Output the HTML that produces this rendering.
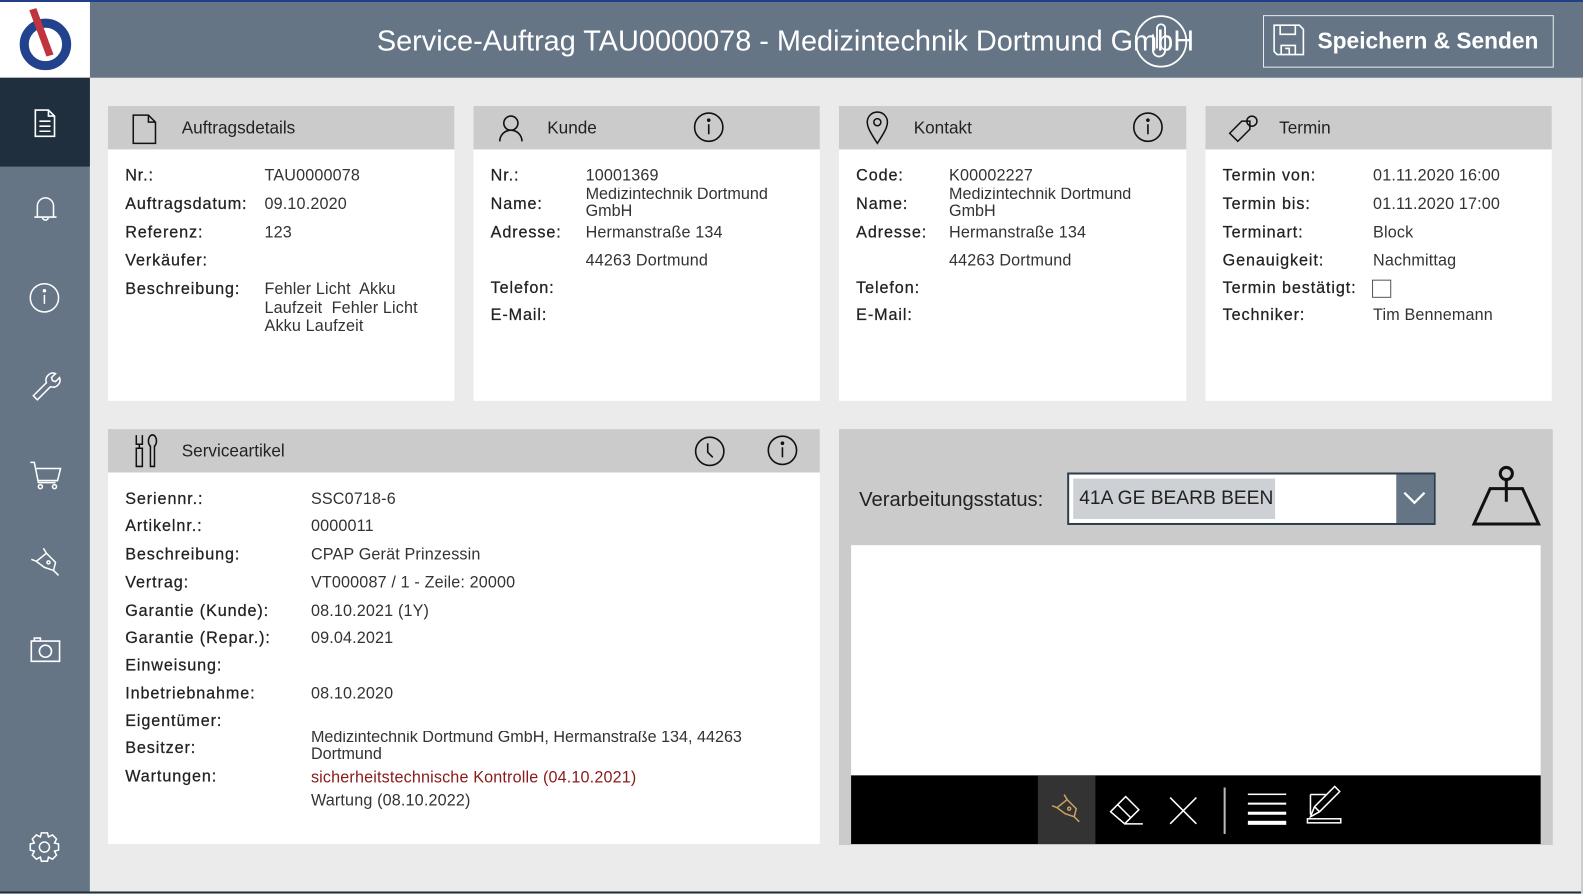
<!DOCTYPE html>
<html><head><meta charset="utf-8"><style>
*{margin:0;padding:0;box-sizing:border-box}
body{width:1583px;height:893px;overflow:hidden;background:#ebebeb;font-family:"Liberation Sans",sans-serif;position:relative}
#wrap{position:absolute;left:0;top:0;width:1568px;height:885px;transform:scale(1.0096);transform-origin:0 0}
.a{position:absolute}
#top{left:0;top:0;width:1568px;height:2px;background:#22408a}
#hdr{left:89px;top:2px;width:1479px;height:75px;background:#657585}
#logo{left:0;top:2px;width:89px;height:75px;background:#fff}
#side{left:0;top:77px;width:89px;height:808px;background:#657585}
#act{left:0;top:77px;width:89px;height:88px;background:#1f2f3d}
.card{background:#fff}
.ch{position:absolute;left:0;top:0;right:0;height:43px;background:#cbcbcb}
.ct{position:absolute;top:12px;font-size:17px;color:#222}
.l{position:absolute;font-size:16px;line-height:20px;color:#222;letter-spacing:.9px;-webkit-text-stroke:.25px #222;margin-top:2px}
.v{position:absolute;font-size:16px;line-height:20px;color:#333;letter-spacing:.15px;margin-top:2px}
.v2{position:absolute;font-size:16px;line-height:17px;color:#333;margin-top:1px}
svg{position:absolute;overflow:visible}
</style></head><body><div id="wrap">
<div class="a" id="hdr"></div>
<div class="a" id="top"></div>
<div class="a" id="logo"></div>
<svg style="left:0;top:2px" width="89" height="75"><circle cx="45" cy="42" r="21" fill="none" stroke="#23428e" stroke-width="9"/><path d="M29 8 L36 6 L53 52 L46 54 Z" fill="#c0343f"/></svg>
<div class="a" id="side"></div>
<div class="a" id="act"></div>
<div class="a" style="left:0;top:883px;width:1568px;height:2px;background:#1f2f3d"></div>
<div class="a" style="left:1566px;top:77px;width:2px;height:808px;background:#ccc"></div>

<svg style="left:33px;top:108px" width="24" height="28" fill="none" stroke="#fff" stroke-width="1.6"><path d="M2 1h13l6 6v20H2z M15 1v6h6 M6 12h11 M6 17h11 M6 22h11"/></svg>
<svg style="left:32px;top:193px" width="26" height="30" fill="none" stroke="#fff" stroke-width="1.5"><path d="M5 22V11a8 8 0 0 1 16 0v11 M2 22h22 M10 22a3 3 0 0 0 6 0"/></svg>
<svg style="left:29px;top:280px" width="30" height="30" fill="none" stroke="#fff" stroke-width="1.5"><circle cx="15" cy="15" r="14"/><path d="M15 12v9"/><circle cx="15" cy="8" r="1" fill="#fff"/></svg>
<svg style="left:31px;top:367px" width="30" height="30" fill="none" stroke="#fff" stroke-width="1.5"><path d="M2 25l13-13a7 7 0 0 1 9-9l-4 4 1 3 3 1 4-4a7 7 0 0 1-9 9L6 29z"/></svg>
<svg style="left:29px;top:456px" width="32" height="30" fill="none" stroke="#fff" stroke-width="1.5"><path d="M1 2h4l4 20h17 M7 8h24l-3 12H9"/><circle cx="11" cy="26" r="2"/><circle cx="25" cy="26" r="2"/></svg>
<svg style="left:29px;top:542px" width="32" height="32" fill="none" stroke="#fff" stroke-width="1.5"><path d="M14 1l3 5-10 8 M2 12l5 2 M17 6l9 9-2 8-9-3-8-6 M24 23l5 5"/><circle cx="19" cy="15" r="1.5"/></svg>
<svg style="left:30px;top:631px" width="30" height="26" fill="none" stroke="#fff" stroke-width="1.6"><path d="M1 4h28v20H1z M4 4V1h6v3"/><circle cx="15" cy="14" r="6"/></svg>
<svg style="left:28px;top:823px" width="32" height="32" fill="none" stroke="#fff" stroke-width="1.5"><circle cx="16" cy="16" r="5"/><path d="M13 2h6l1 4 4-2 4 4-2 4 4 1v6l-4 1 2 4-4 4-4-2-1 4h-6l-1-4-4 2-4-4 2-4-4-1v-6l4-1-2-4 4-4 4 2z"/></svg>

<div class="a" style="left:89px;top:21px;width:1378px;text-align:center;color:#fff;font-size:28.6px;line-height:40px">Service-Auftrag TAU0000078 - Medizintechnik Dortmund GmbH</div>
<svg style="left:1123px;top:14px" width="54" height="54" fill="none" stroke="#fff" stroke-width="1.8"><circle cx="27" cy="27" r="25"/><path d="M23 34V14a4 4 0 0 1 8 0v22a6 6 0 0 1-12 0V20"/></svg>
<div class="a" style="left:1251px;top:15px;width:288px;height:52px;border:1.5px solid #e8ecef"></div>
<svg style="left:1261px;top:24px" width="32" height="32" fill="none" stroke="#fff" stroke-width="1.6"><path d="M1 1h25l4 4v25H4l-3-3z M7 1v9h15V1 M8 30v-9h14v9 M12 24h4v6"/></svg>
<div class="a" style="left:1305px;top:25px;color:#fff;font-size:22.5px;line-height:32px;font-weight:bold">Speichern &amp; Senden</div>

<div class="a card" style="left:107px;top:105px;width:343px;height:292px">
<div class="ch"></div>
<svg style="left:24px;top:8px" width="26" height="30" fill="none" stroke="#111" stroke-width="1.5"><path d="M1 1h15l7 7v21H1z M16 1v7h7"/></svg>
<div class="ct" style="left:73px">Auftragsdetails</div>
<div class="l" style="left:17px;top:58px">Nr.:</div><div class="v" style="left:155px;top:58px">TAU0000078</div>
<div class="l" style="left:17px;top:86px">Auftragsdatum:</div><div class="v" style="left:155px;top:86px">09.10.2020</div>
<div class="l" style="left:17px;top:114px">Referenz:</div><div class="v" style="left:155px;top:114px">123</div>
<div class="l" style="left:17px;top:142px">Verkäufer:</div>
<div class="l" style="left:17px;top:170px">Beschreibung:</div>
<div class="v" style="left:155px;top:171px;width:175px;line-height:18.5px">Fehler Licht&nbsp; Akku Laufzeit&nbsp; Fehler Licht Akku Laufzeit</div>
</div>

<div class="a card" style="left:469px;top:105px;width:343px;height:292px">
<div class="ch"></div>
<svg style="left:24px;top:8px" width="26" height="28" fill="none" stroke="#111" stroke-width="1.6"><circle cx="13" cy="9" r="7"/><path d="M2 27a11 11 0 0 1 22 0"/></svg>
<div class="ct" style="left:73px">Kunde</div>
<svg style="left:218px;top:6px" width="30" height="30" fill="none" stroke="#111" stroke-width="1.6"><circle cx="15" cy="15" r="14"/><path d="M15 12v10"/><circle cx="15" cy="8" r="1" fill="#111"/></svg>
<div class="l" style="left:17px;top:58px">Nr.:</div><div class="v" style="left:111px;top:58px">10001369</div>
<div class="l" style="left:17px;top:86px">Name:</div><div class="v2" style="left:111px;top:80px;height:33px;overflow:hidden;width:225px"><div style="margin-top:-2px">Medizintechnik Dortmund GmbH</div></div>
<div class="l" style="left:17px;top:114px">Adresse:</div><div class="v" style="left:111px;top:114px">Hermanstraße 134</div>
<div class="v" style="left:111px;top:142px">44263 Dortmund</div>
<div class="l" style="left:17px;top:169px">Telefon:</div>
<div class="l" style="left:17px;top:196px">E-Mail:</div>
</div>

<div class="a card" style="left:831px;top:105px;width:344px;height:292px">
<div class="ch"></div>
<svg style="left:27px;top:6px" width="22" height="32" fill="none" stroke="#111" stroke-width="1.5"><path d="M11 31C4 20 1 15 1 10a10 10 0 0 1 20 0c0 5-3 10-10 21z"/><circle cx="11" cy="10" r="3.5"/></svg>
<div class="ct" style="left:74px">Kontakt</div>
<svg style="left:291px;top:6px" width="30" height="30" fill="none" stroke="#111" stroke-width="1.6"><circle cx="15" cy="15" r="14"/><path d="M15 12v10"/><circle cx="15" cy="8" r="1" fill="#111"/></svg>
<div class="l" style="left:17px;top:58px">Code:</div><div class="v" style="left:109px;top:58px">K00002227</div>
<div class="l" style="left:17px;top:86px">Name:</div><div class="v2" style="left:109px;top:80px;height:33px;overflow:hidden;width:225px"><div style="margin-top:-2px">Medizintechnik Dortmund GmbH</div></div>
<div class="l" style="left:17px;top:114px">Adresse:</div><div class="v" style="left:109px;top:114px">Hermanstraße 134</div>
<div class="v" style="left:109px;top:142px">44263 Dortmund</div>
<div class="l" style="left:17px;top:169px">Telefon:</div>
<div class="l" style="left:17px;top:196px">E-Mail:</div>
</div>

<div class="a card" style="left:1194px;top:105px;width:343px;height:292px">
<div class="ch"></div>
<svg style="left:22px;top:7px" width="32" height="30" fill="none" stroke="#111" stroke-width="1.5"><path d="M2 20L14 8h8v8L10 28z"/><circle cx="24" cy="8" r="5"/></svg>
<div class="ct" style="left:73px">Termin</div>
<div class="l" style="left:17px;top:58px">Termin von:</div><div class="v" style="left:166px;top:58px">01.11.2020 16:00</div>
<div class="l" style="left:17px;top:86px">Termin bis:</div><div class="v" style="left:166px;top:86px">01.11.2020 17:00</div>
<div class="l" style="left:17px;top:114px">Terminart:</div><div class="v" style="left:166px;top:114px">Block</div>
<div class="l" style="left:17px;top:142px">Genauigkeit:</div><div class="v" style="left:166px;top:142px">Nachmittag</div>
<div class="l" style="left:17px;top:169px">Termin bestätigt:</div>
<div class="a" style="left:165px;top:172px;width:19px;height:18px;border:1.5px solid #555;background:#fff"></div>
<div class="l" style="left:17px;top:196px">Techniker:</div><div class="v" style="left:166px;top:196px">Tim Bennemann</div>
</div>

<div class="a card" style="left:107px;top:425px;width:705px;height:411px">
<div class="ch"></div>
<svg style="left:25px;top:5px" width="24" height="34" fill="none" stroke="#111" stroke-width="1.5"><path d="M3 1v9h6V1 M6 10v4 M3 14h6v18H3z M17 12a4 6 0 1 1 4 0v20h-4z"/></svg>
<div class="ct" style="left:73px">Serviceartikel</div>
<svg style="left:581px;top:7px" width="30" height="30" fill="none" stroke="#111" stroke-width="1.6"><circle cx="15" cy="15" r="14"/><path d="M13 7v9l5 5"/></svg>
<svg style="left:653px;top:6px" width="30" height="30" fill="none" stroke="#111" stroke-width="1.6"><circle cx="15" cy="15" r="14"/><path d="M15 12v10"/><circle cx="15" cy="8" r="1" fill="#111"/></svg>
<div class="l" style="left:17px;top:58px">Seriennr.:</div><div class="v" style="left:201px;top:58px">SSC0718-6</div>
<div class="l" style="left:17px;top:85px">Artikelnr.:</div><div class="v" style="left:201px;top:85px">0000011</div>
<div class="l" style="left:17px;top:113px">Beschreibung:</div><div class="v" style="left:201px;top:113px">CPAP Gerät Prinzessin</div>
<div class="l" style="left:17px;top:141px">Vertrag:</div><div class="v" style="left:201px;top:141px">VT000087 / 1 - Zeile: 20000</div>
<div class="l" style="left:17px;top:169px">Garantie (Kunde):</div><div class="v" style="left:201px;top:169px">08.10.2021 (1Y)</div>
<div class="l" style="left:17px;top:196px">Garantie (Repar.):</div><div class="v" style="left:201px;top:196px">09.04.2021</div>
<div class="l" style="left:17px;top:223px">Einweisung:</div>
<div class="l" style="left:17px;top:251px">Inbetriebnahme:</div><div class="v" style="left:201px;top:251px">08.10.2020</div>
<div class="l" style="left:17px;top:278px">Eigentümer:</div>
<div class="l" style="left:17px;top:305px">Besitzer:</div><div class="v2" style="left:201px;top:298px;height:33px;overflow:hidden;width:470px"><div style="margin-top:-2px">Medizintechnik Dortmund GmbH, Hermanstraße 134, 44263 Dortmund</div></div>
<div class="l" style="left:17px;top:333px">Wartungen:</div>
<div class="v" style="left:201px;top:334px;color:#8b1a1a">sicherheitstechnische Kontrolle (04.10.2021)</div>
<div class="v" style="left:201px;top:357px">Wartung (08.10.2022)</div>
</div>

<div class="a" style="left:831px;top:425px;width:707px;height:412px;background:#cbcbcb"></div>
<div class="a" style="left:851px;top:484px;font-size:20px;color:#222">Verarbeitungsstatus:</div>
<div class="a" style="left:1057px;top:468px;width:365px;height:52px;border:2px solid #2c3e4e;background:#fff"></div>
<div class="a" style="left:1063px;top:474px;width:200px;height:40px;background:#cdd1d6"></div>
<div class="a" style="left:1069px;top:483px;font-size:19px;color:#222">41A GE BEARB BEEN</div>
<div class="a" style="left:1383px;top:470px;width:37px;height:48px;background:#657585"></div>
<svg style="left:1389px;top:486px" width="24" height="16" fill="none" stroke="#fff" stroke-width="2.2"><path d="M2 2l10 10 10-10"/></svg>
<svg style="left:1457px;top:460px" width="70" height="62" fill="none" stroke="#111" stroke-width="3"><circle cx="35" cy="9" r="6"/><path d="M35 15v22 M19 24h32l16 35H3z"/></svg>
<div class="a" style="left:843px;top:540px;width:683px;height:228px;background:#fff"></div>
<div class="a" style="left:843px;top:768px;width:683px;height:68px;background:#000"></div>
<div class="a" style="left:1028px;top:768px;width:57px;height:68px;background:#333"></div>
<svg style="left:1040px;top:786px" width="34" height="34" fill="none" stroke="#c9a264" stroke-width="1.5"><path d="M14 1l3 5-10 8 M2 12l5 2 M17 6l9 9-2 8-9-3-8-6 M24 23l5 5"/><circle cx="19" cy="15" r="1.5"/></svg>
<svg style="left:1098px;top:786px" width="36" height="34" fill="none" stroke="#fff" stroke-width="1.5"><path d="M2 18L17 3l13 13-14 14z M9 11l13 13 M16 30h18"/></svg>
<svg style="left:1157px;top:788px" width="30" height="30" fill="none" stroke="#fff" stroke-width="1.5"><path d="M2 2l26 26 M28 2L2 28"/></svg>
<div class="a" style="left:1212px;top:780px;width:2px;height:46px;background:#bbb"></div>
<svg style="left:1236px;top:786px" width="40" height="34" fill="#fff"><rect x="0" y="0" width="38" height="1.5"/><rect x="0" y="9" width="38" height="2"/><rect x="0" y="18" width="38" height="3"/><rect x="0" y="27" width="38" height="4"/></svg>
<svg style="left:1294px;top:783px" width="40" height="40" fill="none" stroke="#fff" stroke-width="1.5"><path d="M4 4h15 M4 4v20 M4 26l4-10L28 -4l5 5L13 21z M8 16l5 5"/><rect x="1" y="28" width="33" height="4"/></svg>
</div></body></html>
